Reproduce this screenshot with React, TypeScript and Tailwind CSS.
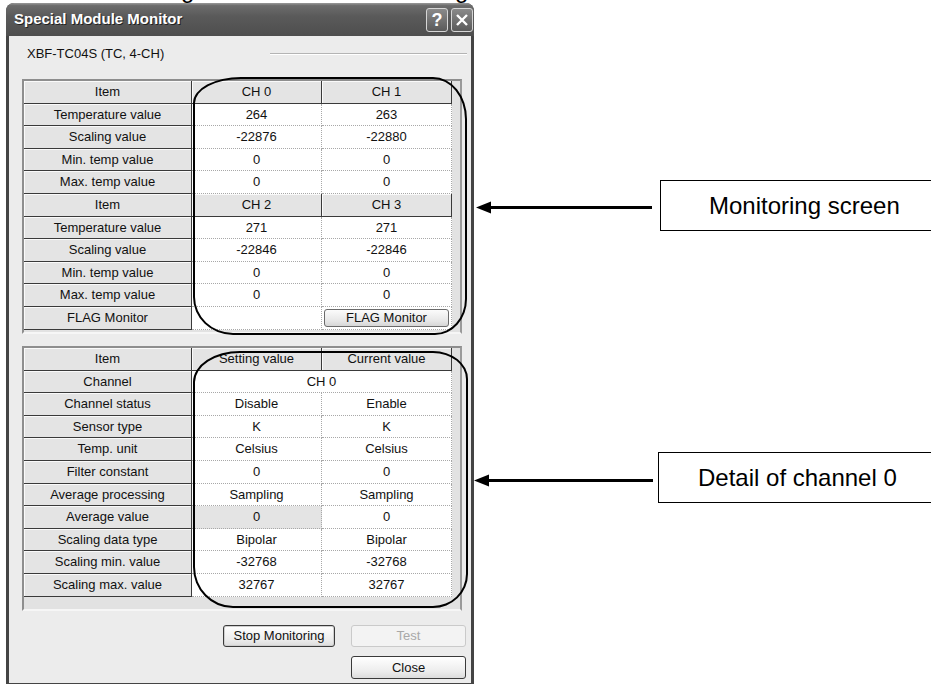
import React from "react";

type Row =
  | { kind: "head"; cells: [string, string, string] }
  | { kind: "data"; cells: [string, string, string]; grayFirst?: boolean }
  | { kind: "span"; cells: [string, string] }
  | { kind: "flag" };

const top: Row[] = [
  { kind: "head", cells: ["Item", "CH 0", "CH 1"] },
  { kind: "data", cells: ["Temperature value", "264", "263"] },
  { kind: "data", cells: ["Scaling value", "-22876", "-22880"] },
  { kind: "data", cells: ["Min. temp value", "0", "0"] },
  { kind: "data", cells: ["Max. temp value", "0", "0"] },
  { kind: "head", cells: ["Item", "CH 2", "CH 3"] },
  { kind: "data", cells: ["Temperature value", "271", "271"] },
  { kind: "data", cells: ["Scaling value", "-22846", "-22846"] },
  { kind: "data", cells: ["Min. temp value", "0", "0"] },
  { kind: "data", cells: ["Max. temp value", "0", "0"] },
  { kind: "flag" },
];

const bottom: Row[] = [
  { kind: "head", cells: ["Item", "Setting value", "Current value"] },
  { kind: "span", cells: ["Channel", "CH 0"] },
  { kind: "data", cells: ["Channel status", "Disable", "Enable"] },
  { kind: "data", cells: ["Sensor type", "K", "K"] },
  { kind: "data", cells: ["Temp. unit", "Celsius", "Celsius"] },
  { kind: "data", cells: ["Filter constant", "0", "0"] },
  { kind: "data", cells: ["Average processing", "Sampling", "Sampling"] },
  { kind: "data", cells: ["Average value", "0", "0"], grayFirst: true },
  { kind: "data", cells: ["Scaling data type", "Bipolar", "Bipolar"] },
  { kind: "data", cells: ["Scaling min. value", "-32768", "-32768"] },
  { kind: "data", cells: ["Scaling max. value", "32767", "32767"] },
];

function HeadCell({ children }: { children?: React.ReactNode }) {
  return (
    <div className="flex items-center justify-center bg-[#e4e4e4] border-r border-b border-[#3a3a3a] shadow-[inset_1px_1px_0_#fafafa] whitespace-nowrap">
      {children}
    </div>
  );
}

function DataCell({ children, gray }: { children?: React.ReactNode; gray?: boolean }) {
  return (
    <div
      className={
        "flex items-center justify-center border-r border-b border-dotted border-[#a8a8a8] whitespace-nowrap " +
        (gray ? "bg-[#e4e4e4]" : "bg-white")
      }
    >
      {children}
    </div>
  );
}

function Grid({ rows }: { rows: Row[] }) {
  return (
    <div className="grid grid-cols-[168px_130px_130px] auto-rows-[22.6px]">
      {rows.map((r, i) => {
        if (r.kind === "head")
          return (
            <React.Fragment key={i}>
              <HeadCell>{r.cells[0]}</HeadCell>
              <HeadCell>{r.cells[1]}</HeadCell>
              <HeadCell>{r.cells[2]}</HeadCell>
            </React.Fragment>
          );
        if (r.kind === "span")
          return (
            <React.Fragment key={i}>
              <HeadCell>{r.cells[0]}</HeadCell>
              <div className="col-span-2 flex items-center justify-center bg-white border-r border-b border-dotted border-[#a8a8a8]">
                {r.cells[1]}
              </div>
            </React.Fragment>
          );
        if (r.kind === "flag")
          return (
            <React.Fragment key={i}>
              <HeadCell>FLAG Monitor</HeadCell>
              <DataCell />
              <div className="flex items-center justify-center bg-white border-r border-b border-dotted border-[#a8a8a8] px-[2px]">
                <div className="w-[126px] h-[18px] flex items-center justify-center rounded-[3px] border border-[#6a6a6a] bg-[linear-gradient(to_bottom,#fbfbfb,#e6e6e6_70%,#d6d6d6)]">
                  FLAG Monitor
                </div>
              </div>
            </React.Fragment>
          );
        return (
          <React.Fragment key={i}>
            <HeadCell>{r.cells[0]}</HeadCell>
            <DataCell gray={r.grayFirst}>{r.cells[1]}</DataCell>
            <DataCell>{r.cells[2]}</DataCell>
          </React.Fragment>
        );
      })}
    </div>
  );
}

function Panel({ rows, h }: { rows: Row[]; h: string }) {
  return (
    <div
      className={
        "w-[440px] bg-[#e2e2e2] border-t-2 border-l-2 border-t-[#8e8e8e] border-l-[#8e8e8e] border-r-2 border-b-2 border-r-[#9a9a9a] border-b-[#f6f6f6] " +
        h
      }
    >
      <Grid rows={rows} />
    </div>
  );
}

function TitleBtn({ children }: { children: React.ReactNode }) {
  return (
    <div className="w-[22px] h-[24px] rounded-[3px] border border-[#d6d6d6] bg-[linear-gradient(to_bottom,#8a8a8a,#5a5a5a)] flex items-center justify-center text-white font-bold text-[18px] leading-none">
      {children}
    </div>
  );
}

function Window() {
  return (
    <div className="w-[468px] h-[690px] flex flex-col rounded-t-[8px] overflow-hidden bg-[#444]">
      <div className="h-[33px] shrink-0 flex items-center pl-[8px] pr-[1px] gap-[3px] bg-[linear-gradient(to_bottom,#9a9a9a_0%,#6c6c6c_8%,#5a5a5a_40%,#4e4e4e_100%)]">
        <span className="flex-1 text-white font-bold text-[15px] [text-shadow:1px_1px_0_#222]">
          Special Module Monitor
        </span>
        <TitleBtn>?</TitleBtn>
        <TitleBtn>
          <svg width="14" height="14" viewBox="0 0 14 14">
            <path d="M2 2L12 12M12 2L2 12" stroke="white" strokeWidth="2.4" />
          </svg>
        </TitleBtn>
      </div>
      <div className="mx-[3px] h-[647px] shrink-0 bg-[#ececec] flex flex-col">
        <div className="mt-[10px] h-[16px] flex items-center pl-[18px] pr-[4px]">
          <span>XBF-TC04S (TC, 4-CH)</span>
          <div className="ml-auto w-[197px] h-[2px] border-t border-t-[#b4b4b4] border-b border-b-white" />
        </div>
        <div className="ml-[13px] mt-[17px]">
          <Panel rows={top} h="h-[255px]" />
        </div>
        <div className="ml-[13px] mt-[12px]">
          <Panel rows={bottom} h="h-[265px]" />
        </div>
        <div className="mt-[14px] flex pl-[214px] gap-[16px]">
          <div className="w-[112px] h-[22px] rounded-[3px] border border-[#3a3a3a] bg-[linear-gradient(to_bottom,#ffffff,#ececec_70%,#dcdcdc)] shadow-[inset_0_0_0_1px_#cfcfcf] flex items-center justify-center">
            Stop Monitoring
          </div>
          <div className="w-[115px] h-[22px] rounded-[3px] border border-[#cacaca] bg-[#f3f3f3] text-[#a8a8a8] flex items-center justify-center">
            Test
          </div>
        </div>
        <div className="mt-[9px] flex pl-[342px]">
          <div className="w-[115px] h-[23px] rounded-[3px] border border-[#3a3a3a] bg-[linear-gradient(to_bottom,#ffffff,#ececec_70%,#dcdcdc)] flex items-center justify-center">
            Close
          </div>
        </div>
      </div>
    </div>
  );
}

export default function App() {
  return (
    <div className="relative w-[931px] h-[684px] overflow-hidden bg-white font-['Liberation_Sans',Arial,sans-serif] text-[13px] text-[#111]">
      <span className="absolute left-[181px] top-[-22px] text-[24px] leading-[24px] text-black">g</span>
      <span className="absolute left-[455px] top-[-22px] text-[24px] leading-[24px] text-black">g</span>

      <div className="pl-[6px] pt-[3px]">
        <Window />
      </div>

      {/* highlight outlines */}
      <div className="absolute left-[193px] top-[77px] w-[274px] h-[258px] border-2 border-black rounded-[48px_34px_32px_40px/26px_42px_36px_38px] pointer-events-none" />
      <div className="absolute left-[193px] top-[351px] w-[275px] h-[257px] border-2 border-black rounded-[47px_35px_35px_40px/31px_28px_34px_41px] pointer-events-none" />

      {/* arrows */}
      <svg className="absolute left-0 top-0 pointer-events-none" width="931" height="684" viewBox="0 0 931 684">
        <line x1="486" y1="207.5" x2="652" y2="207.5" stroke="black" strokeWidth="3" />
        <polygon points="476,207.5 491,201.5 491,213.5" fill="black" />
        <line x1="484" y1="480.5" x2="653" y2="480.5" stroke="black" strokeWidth="3" />
        <polygon points="474,480.5 489,474.5 489,486.5" fill="black" />
      </svg>

      {/* callouts */}
      <div className="absolute left-[660px] top-[180px] w-[290px] h-[51px] border-[1.5px] border-black bg-white flex items-center pl-[48px] text-[24px] text-black">
        Monitoring screen
      </div>
      <div className="absolute left-[658px] top-[452px] w-[290px] h-[51px] border-[1.5px] border-black bg-white flex items-center pl-[39px] text-[24px] text-black">
        Detail of channel 0
      </div>
    </div>
  );
}
